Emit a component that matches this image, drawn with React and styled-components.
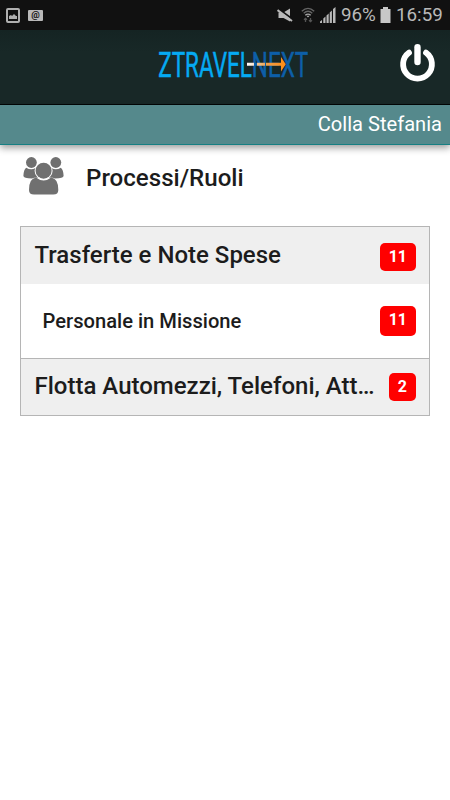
import React from "react";
import styled, { createGlobalStyle } from "styled-components";

const GlobalStyle = createGlobalStyle`
  body {
    margin: 0;
    background: #fff;
    color: #1c1c1c;
    font-family: Roboto, "Liberation Sans", sans-serif;
  }

  svg {
    display: block;
  }
`;

const Screen = styled.main`
  display: flex;
  flex-direction: column;
  width: 450px;
  height: 800px;
  overflow: hidden;
  background: #fff;
`;

const StatusBar = styled.div`
  display: flex;
  align-items: center;
  justify-content: space-between;
  flex: none;
  height: 30px;
  padding: 0 7px 0 6px;
  box-sizing: border-box;
  background: #111;
  color: #b9b9b9;
`;

const StatusGroup = styled.div`
  display: flex;
  align-items: center;
  gap: ${({ $gap }) => $gap}px;
`;

const StatusText = styled.span`
  width: ${({ $width }) => $width}px;
  padding-top: 1px;
  font-size: 18.8px;
  line-height: 29px;
  white-space: nowrap;
`;

const Header = styled.header`
  display: grid;
  grid-template-columns: 1fr 154px 1fr;
  align-items: center;
  flex: none;
  height: 75px;
  box-sizing: border-box;
  border-bottom: 1px solid #020606;
  background: linear-gradient(#152423, #182827 30%);
`;

const Logo = styled.svg`
  grid-column: 2;
  margin-left: 8px;
  overflow: visible;
`;

const PowerButton = styled.button`
  justify-self: end;
  margin: -8px 14px 0 0;
  padding: 0;
  border: 0;
  background: none;
`;

const UserBar = styled.div`
  flex: none;
  height: 40px;
  padding-right: 8px;
  box-sizing: border-box;
  border-bottom: 1px solid #168083;
  background: #55898c;
  box-shadow: 0 3px 7px rgba(0, 0, 0, 0.38);
  color: #fff;
  font-size: 20.1px;
  line-height: 39px;
  text-align: right;
`;

const TitleRow = styled.div`
  display: flex;
  align-items: center;
  gap: 22px;
  height: 65px;
  padding-left: 23px;

  & > svg {
    margin-bottom: 3px;
  }
`;

const Title = styled.h1`
  margin: 0;
  font-size: 24.1px;
  font-weight: 500;
  line-height: 30px;
`;

const List = styled.section`
  margin: 16px 20px 0;
  border: 1px solid #b5b5b5;
`;

const Row = styled.div`
  display: flex;
  align-items: center;
  justify-content: space-between;
  box-sizing: border-box;
  height: 57px;
  padding: 0 13px 0 13.5px;
  background: #efefef;
  font-size: 24px;
  font-weight: 500;

  &:last-child {
    height: 56px;
    padding-bottom: 2px;
  }
`;

const SubRow = styled(Row)`
  height: 75px;
  padding: 0 13px 0 21.5px;
  border-bottom: 1px solid #b5b5b5;
  background: #fff;
  font-size: 20.15px;
`;

const Label = styled.span`
  padding-bottom: 1px;
  white-space: nowrap;
`;

const Badge = styled.span`
  flex: none;
  height: ${({ $tall }) => ($tall ? 30 : 28)}px;
  padding: 0 9px;
  margin-top: ${({ $tall }) => ($tall ? 0 : 2)}px;
  border-radius: 5px;
  background: #f00;
  color: #fff;
  font-size: 16px;
  font-weight: 700;
  line-height: 27px;
`;

const PictureIcon = () => (
  <svg width="14" height="15" viewBox="0 0 14 15">
    <rect x="1" y="1" width="12" height="13" rx="1" fill="none" stroke="#b0b0b0" strokeWidth="2" />
    <path d="M3 11V8l2-1 1 1 2-2 2 2 1 0v3z" fill="#b0b0b0" />
  </svg>
);

const MailIcon = () => (
  <svg width="15" height="11" viewBox="0 0 15 11">
    <rect width="15" height="11" rx="1" fill="#b9b9b9" />
    <text x="7.5" y="8.4" fontSize="9.5" fontWeight="700" textAnchor="middle" fill="#111">@</text>
  </svg>
);

const MuteIcon = () => (
  <svg width="16" height="15" viewBox="0 0 16 15" fill="#b9b9b9">
    <path d="M1.5 4.5h5L13 .5v13L6.5 10h-5z" />
    <path d="M0 0l16 11.5" stroke="#111" strokeWidth="2" />
    <path d="M.5 2L15 13" stroke="#b9b9b9" strokeWidth="2" />
  </svg>
);

const WifiIcon = () => (
  <svg width="14" height="16" viewBox="0 0 14 16" fill="none" strokeWidth="1.3">
    <path d="M.8 4.2Q7-1.5 13.2 4.2M2.7 6.2q4.3-3.8 8.6 0" stroke="#666" />
    <path d="M4.3 8.3q2.7-2.4 5.4 0" stroke="#aaa" />
    <path d="M5.4 8.8h3.2L7 10.6z" fill="#b9b9b9" />
    <path d="M4.5 15v-3.5M3 12.8l1.5-1.5L6 12.8M9.5 11v3.5M8 13.2l1.5 1.5 1.5-1.5" stroke="#555" />
  </svg>
);

const SignalIcon = () => (
  <svg width="16" height="16" viewBox="0 0 16 16" fill="#b9b9b9">
    <path d="M0 14.5L2 13v3H0zM3.3 11.5l2.2-2V16H3.3zM6.5 8.5l2.2-2V16H6.5zM9.7 5.5l2.2-2V16H9.7zM13 2l2.5-2v16H13z" />
  </svg>
);

const BatteryIcon = () => (
  <svg width="11" height="16" viewBox="0 0 11 16">
    <path d="M3 0h5v2h2.5v14H.5V2H3z" fill="#c7c7c7" />
  </svg>
);

const PowerIcon = () => (
  <svg width="37" height="40" viewBox="0 0 37 40" fill="none" stroke="#fff" strokeLinecap="round">
    <path d="M10 9.6A14.4 14.4 0 1 0 27 9.6" strokeWidth="5.8" />
    <path d="M18.5 4.3V19" strokeWidth="6.4" />
  </svg>
);

const PeopleIcon = () => (
  <svg width="41" height="38" viewBox="0 0 41 38" fill="#707070">
    <circle cx="8.4" cy="5.5" r="5.4" />
    <circle cx="32.8" cy="5.5" r="5.4" />
    <path d="M3.2 10.7q5 3 9.2.3l1.2 1.1q-1.3 4.7 2 8.5-4.9 0-6.5.9Q.4 21.4.4 18.8q.2-5.9 2.8-8.1z" />
    <path d="M37.8 10.7q-5 3-9.2.3l-1.2 1.1q1.3 4.7-2 8.5 4.9 0 6.5.9 8.7-.1 8.7-2.7-.2-5.9-2.8-8.1z" />
    <circle cx="20.6" cy="13.7" r="9" fill="#fff" />
    <circle cx="20.6" cy="13.7" r="8" />
    <path d="M13 20.5q7.6 6 15.2 0 7.1 1 7.1 12.4 0 4.6-5 4.6H11q-5 0-5-4.6 0-11.4 7-12.4z" />
  </svg>
);

const rows = [
  { label: "Trasferte e Note Spese", count: 11 },
  { label: "Personale in Missione", count: 11, sub: true },
  { label: "Flotta Automezzi, Telefoni, Att…", count: 2 },
];

export default function App() {
  return (
    <Screen>
      <GlobalStyle />
      <StatusBar>
        <StatusGroup $gap={8}>
          <PictureIcon />
          <MailIcon />
        </StatusGroup>
        <StatusGroup $gap={5}>
          <StatusGroup $gap={8}>
            <MuteIcon />
            <WifiIcon />
          </StatusGroup>
          <SignalIcon />
          <StatusText $width={34}>96%</StatusText>
          <BatteryIcon />
          <StatusText $width={47}>16:59</StatusText>
        </StatusGroup>
      </StatusBar>
      <Header>
        <Logo width="154" height="44" viewBox="0 0 154 44" fontSize="34.7" strokeWidth="0.5">
          <defs>
            <linearGradient id="arrow">
              <stop offset="0" stopColor="#fff" />
              <stop offset="0.19" stopColor="#f5dfc8" />
              <stop offset="0.19" stopColor="#0d5fa8" />
              <stop offset="0.25" stopColor="#0d5fa8" />
              <stop offset="0.25" stopColor="#f3c796" />
              <stop offset="0.46" stopColor="#eda85a" />
              <stop offset="0.46" stopColor="#0d5fa8" />
              <stop offset="0.5" stopColor="#0d5fa8" />
              <stop offset="0.5" stopColor="#efa04a" />
              <stop offset="1" stopColor="#ff8b12" />
            </linearGradient>
          </defs>
          <text x="2.2" y="31.7" textLength="150" lengthAdjust="spacingAndGlyphs">
            <tspan fill="#05aaf3" stroke="#05aaf3">ZTRAVEL</tspan>
            <tspan fill="#0d5fa8" stroke="#0d5fa8">NEXT</tspan>
          </text>
          <path d="M91 17.8h34v-5.7l4.8 7.2-4.800 7.200v-5.700H91z" fill="url(#arrow)" />
        </Logo>
        <PowerButton aria-label="Esci">
          <PowerIcon />
        </PowerButton>
      </Header>
      <UserBar>Colla Stefania</UserBar>
      <TitleRow>
        <PeopleIcon />
        <Title>Processi/Ruoli</Title>
      </TitleRow>
      <List>
        {rows.map(({ label, count, sub }) => {
          const Item = sub ? SubRow : Row;
          return (
            <Item key={label}>
              <Label>{label}</Label>
              <Badge $tall={sub}>{count}</Badge>
            </Item>
          );
        })}
      </List>
    </Screen>
  );
}
